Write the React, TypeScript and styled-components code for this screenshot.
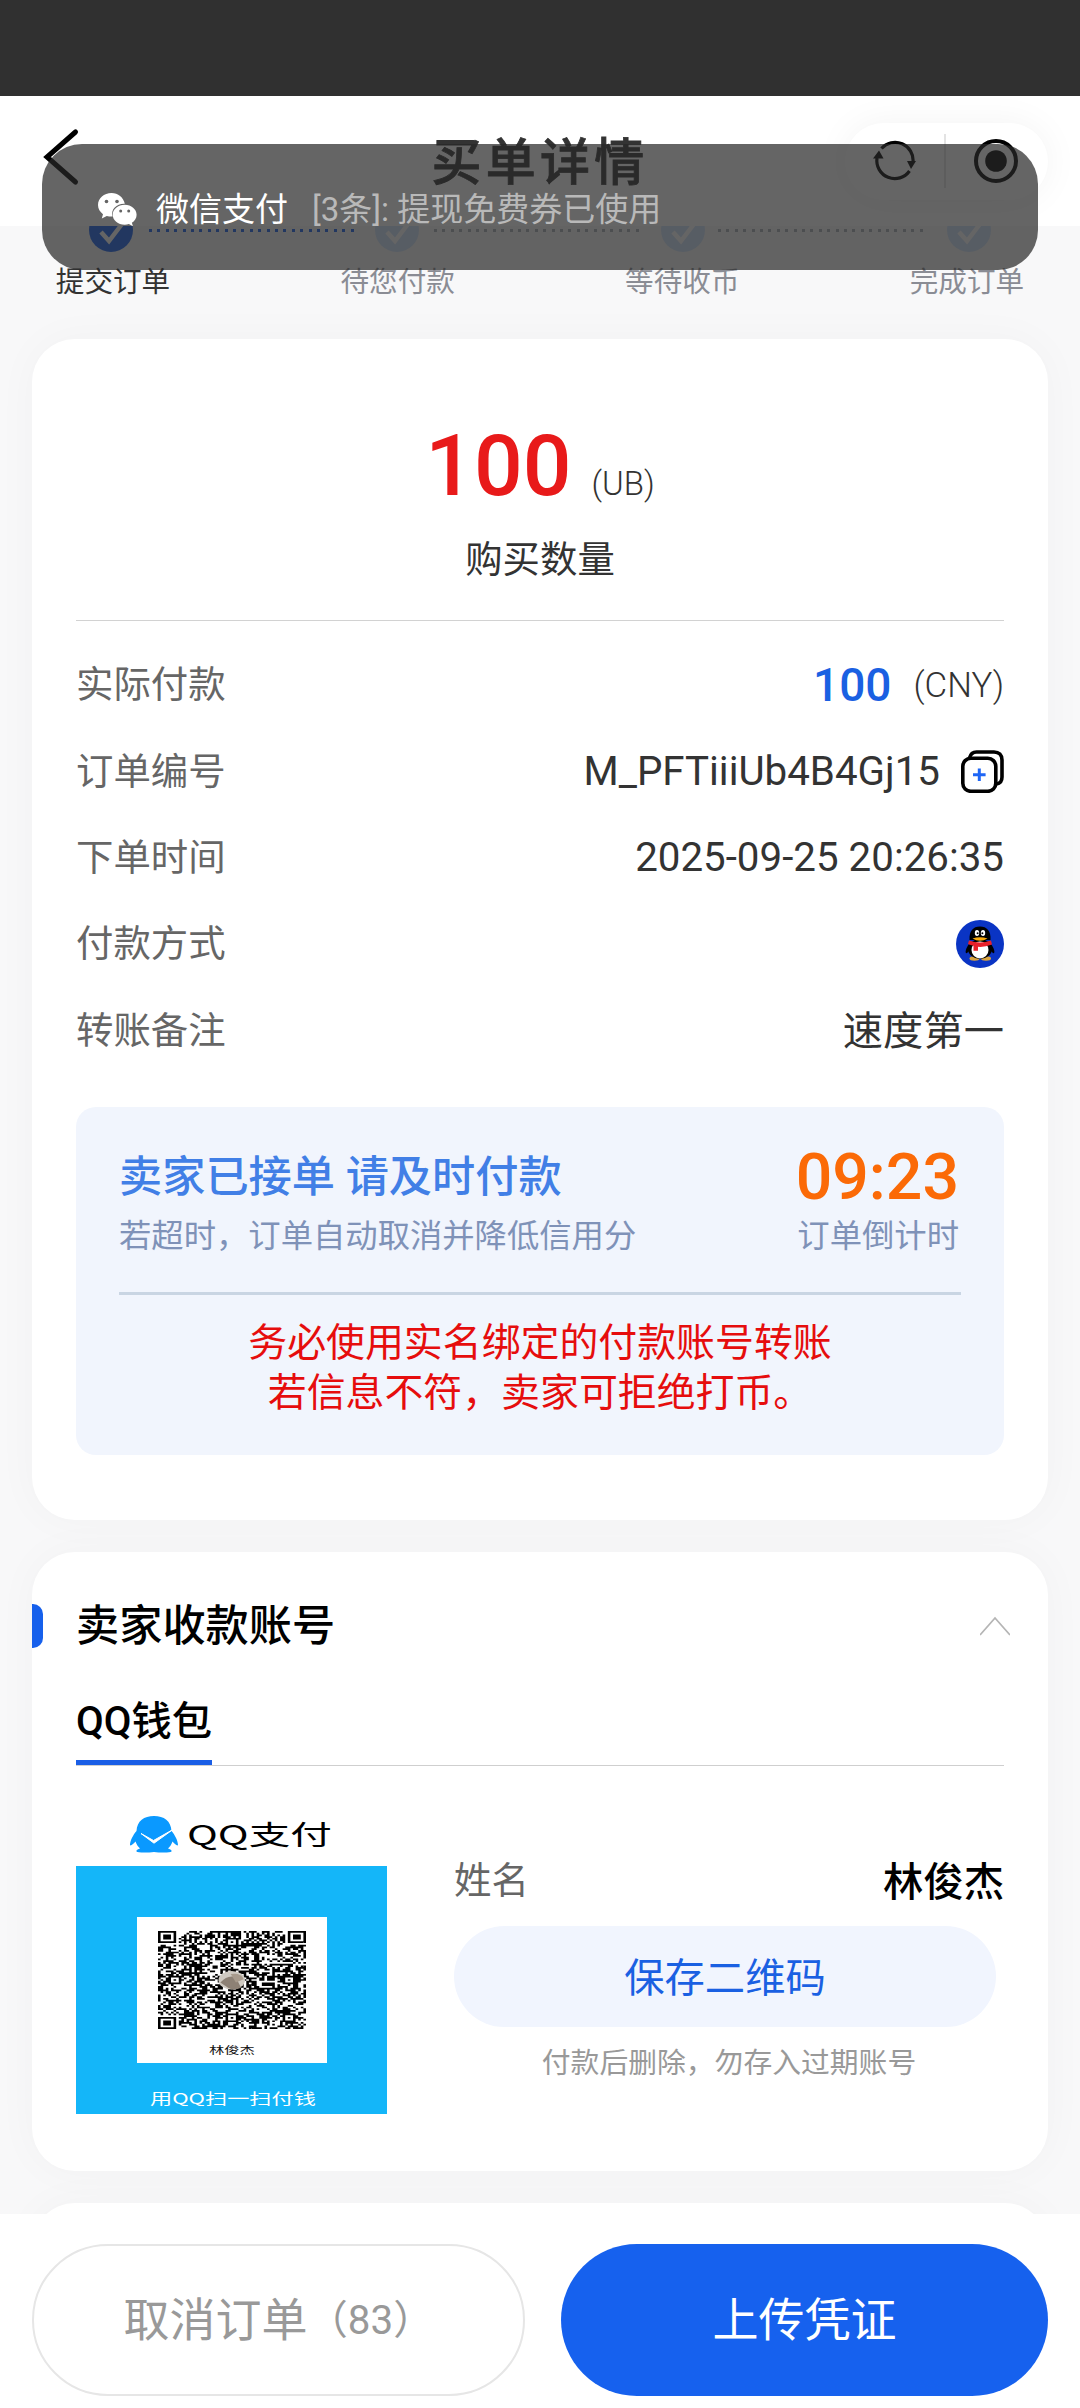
import React from 'react';
import styled, { createGlobalStyle } from 'styled-components';

const GlobalStyle = createGlobalStyle`
  * { box-sizing: border-box; }
  body {
    margin: 0;
    background: #f8f8f9;
    font-family: Roboto, "Noto Sans CJK SC", sans-serif;
    color: #333;
  }
`;

const Page = styled.div`
  position: relative;
  display: flex;
  flex-direction: column;
  width: 1080px;
  height: 2408px;
  overflow: hidden;
`;

const StatusBar = styled.div`
  flex: none;
  height: 96px;
  background: #303030;
`;

const Header = styled.header`
  position: relative;
  z-index: 2;
  flex: none;
  display: grid;
  grid-template-columns: 236px 1fr 236px;
  align-items: center;
  height: 130px;
  padding: 0 32px 0 32px;
  background: #fff;
`;

const BackIcon = styled.svg`
  display: block;
  width: 44px;
  height: 64px;
  margin: -8px 0 0 8px;
`;

const Title = styled.h1`
  margin: 3px 0 0;
  font-size: 50px;
  font-weight: 500;
  line-height: 60px;
  letter-spacing: 4.2px;
  text-align: center;
  color: #333;
  -webkit-text-stroke: 0.8px #333;
`;

const Capsule = styled.div`
  justify-self: end;
  display: flex;
  align-items: center;
  width: 203px;
  height: 77px;
  padding-right: 3px;
  border-radius: 39px;
  background: #fff;
  box-shadow: 0 0 36px rgba(0, 0, 0, 0.05);
`;

const CapsuleButton = styled.div`
  flex: 1;
  display: flex;
  justify-content: center;
  align-items: center;
`;

const CapsuleDivider = styled.div`
  width: 2px;
  height: 54px;
  background: #e3e3e3;
`;

const Toast = styled.div`
  position: absolute;
  z-index: 5;
  left: 42px;
  top: 144px;
  width: 996px;
  height: 126px;
  display: flex;
  align-items: center;
  padding: 4px 56px 0;
  border-radius: 40px;
  background: rgba(39, 39, 39, 0.714);
  font-size: 33px;
  line-height: 40px;
`;

const ToastName = styled.span`
  margin: 2px 0 0 19px;
  color: #fff;
`;

const ToastText = styled.span`
  margin: 2px 0 0 24px;
  color: #b9b9b9;
`;

const Steps = styled.div`
  flex: none;
  display: flex;
  justify-content: space-between;
  height: 131px;
  margin-top: -18px;
  padding: 0 55px;
`;

const Step = styled.div<{ $active?: boolean }>`
  position: relative;
  display: flex;
  flex-direction: column;
  align-items: center;
  width: 116px;
  font-size: 28.6px;
  line-height: 40px;
  white-space: nowrap;
  color: ${p => (p.$active ? '#333' : '#8a8c94')};
`;

const StepDot = styled.svg<{ $shift: number }>`
  display: block;
  width: 44px;
  height: 44px;
  margin: 0 ${p => -p.$shift}px 10px ${p => p.$shift}px;
`;

const StepLine = styled.div<{ $active?: boolean }>`
  position: absolute;
  left: 94px;
  top: 21px;
  width: 208px;
  height: 3px;
  background: repeating-linear-gradient(
    90deg,
    ${p => (p.$active ? '#1660ec' : '#a9adb6')} 0 3px,
    transparent 3px 8.4px
  );
`;

const Card = styled.section<{ $h: number }>`
  flex: none;
  display: flex;
  flex-direction: column;
  height: ${p => p.$h}px;
  margin: 0 32px 32px;
  padding: 0 44px;
  border-radius: 43px;
  background: #fff;
  box-shadow: 0 0 44px rgba(0, 0, 0, 0.03);
`;

const Amount = styled.div`
  display: flex;
  justify-content: center;
  align-items: baseline;
  gap: 20px;
  margin-top: 77px;
  height: 100px;
  font-size: 85.8px;
  line-height: 100px;
  font-weight: 500;
  color: #e81a1a;
`;

const Unit = styled.span<{ $size?: number }>`
  font-size: ${p => p.$size ?? 33}px;
  font-weight: 300;
  line-height: 1;
  color: #333;
`;

const Caption = styled.div`
  margin-top: 19px;
  height: 50px;
  font-size: 37.4px;
  line-height: 50px;
  text-align: center;
`;

const Rule = styled.div`
  flex: none;
  height: 1px;
  margin: 35px 0 21px;
  background: #d2d2d2;
`;

const Row = styled.div`
  display: flex;
  flex: none;
  justify-content: space-between;
  align-items: center;
  height: 86.4px;
`;

const Label = styled.span`
  padding-bottom: 6px;
  font-size: 37.4px;
  color: #666;
`;

const Value = styled.span<{ $cjk?: boolean }>`
  display: flex;
  align-items: center;
  gap: 21px;
  padding-bottom: ${p => (p.$cjk ? 6 : 0)}px;
  font-size: 40.3px;
  color: #333;
`;

const Price = styled.span`
  display: flex;
  align-items: center;
  gap: 22px;
  font-size: 46px;
  font-weight: 500;
  color: #1a60e2;
`;

const Notice = styled.div`
  flex: none;
  display: flex;
  flex-direction: column;
  height: 348px;
  margin-top: 33px;
  padding: 38px 43px 0;
  border-radius: 20px;
  background: #f1f5fd;
`;

const NoticeTop = styled.div`
  display: flex;
  justify-content: space-between;
  height: 147px;
`;

const NoticeCol = styled.div<{ $end?: boolean }>`
  display: flex;
  flex-direction: column;
  align-items: ${p => (p.$end ? 'flex-end' : 'flex-start')};
  padding-right: ${p => (p.$end ? 2 : 0)}px;
`;

const NoticeTitle = styled.div`
  height: 63px;
  font-size: 43.2px;
  font-weight: 500;
  line-height: 66px;
  color: #417fe6;
`;

const Timer = styled.div`
  height: 63px;
  font-size: 64.4px;
  font-weight: 500;
  line-height: 64px;
  color: #fb6a07;
`;

const NoticeSub = styled.div`
  font-size: 32.35px;
  line-height: 56px;
  color: #7f92b8;
`;

const Warning = styled.div`
  padding-top: 23px;
  border-top: 3px solid #c9d5e3;
  font-size: 38.9px;
  line-height: 50.5px;
  text-align: center;
  color: #e60d0d;
`;

const SectionHead = styled.div`
  display: flex;
  align-items: center;
  height: 44px;
  margin: 52px -6px 0 -44px;
`;

const Marker = styled.div`
  width: 11px;
  height: 44px;
  margin-right: 33px;
  border-radius: 0 10px 10px 0;
  background: #1660ec;
`;

const SectionTitle = styled.h2`
  flex: 1;
  margin: 2px 0 0;
  font-size: 43.2px;
  font-weight: 500;
  line-height: 44px;
  color: #000;
`;

const Tabs = styled.div`
  display: flex;
  height: 118px;
  border-bottom: 1px solid #cfcfcf;
`;

const Tab = styled.div`
  display: flex;
  height: 117px;
  padding-top: 48px;
  border-bottom: 5px solid #1a5ee6;
  font-size: 40.3px;
  font-weight: 500;
  line-height: 52px;
  color: #000;
`;

const Payee = styled.div`
  display: flex;
  gap: 67px;
  margin-top: 34px;
`;

const PayCode = styled.div`
  flex: none;
  width: 311px;
  height: 314px;
  display: flex;
  flex-direction: column;
`;

const PayCodeHead = styled.div`
  flex: none;
  display: flex;
  align-items: center;
  gap: 9px;
  height: 66px;
  padding: 2px 0 0 54px;
`;

const Wide = styled.span<{ $size: number; $w: number; $color: string; $scale: number }>`
  display: block;
  flex: none;
  width: ${p => p.$w}px;
  font-family: "Noto Sans CJK SC", sans-serif;
  font-size: ${p => p.$size}px;
  line-height: ${p => p.$size * 1.4}px;
  white-space: nowrap;
  color: ${p => p.$color};
  transform: scaleX(${p => p.$scale});
  transform-origin: left center;
`;

const PayCodeBody = styled.div`
  flex: none;
  display: flex;
  flex-direction: column;
  align-items: center;
  height: 248px;
  padding-top: 51px;
  background: #14b6f9;
`;

const PayCodeFrame = styled.div`
  display: flex;
  flex-direction: column;
  align-items: center;
  width: 190px;
  height: 146px;
  margin-bottom: 25px;
  padding-top: 14px;
  background: #fff;
`;

const QrSvg = styled.svg`
  display: block;
  flex: none;
  width: 148px;
  height: 98px;
  margin-bottom: 14px;
`;

const PayeeInfo = styled.div`
  flex: 1;
  display: flex;
  flex-direction: column;
  padding-top: 56px;
`;

const PayeeRow = styled.div`
  display: flex;
  justify-content: space-between;
  align-items: center;
  height: 50px;
`;

const PayeeName = styled.span`
  padding-bottom: 6px;
  font-size: 40.3px;
  font-weight: 500;
  color: #000;
`;

const SaveButton = styled.button`
  width: 542px;
  height: 101px;
  margin-top: 20px;
  padding: 0 0 5px;
  border: 0;
  border-radius: 51px;
  background: #f1f5fe;
  font: inherit;
  font-size: 40.3px;
  color: #1a60e2;
`;

const Tip = styled.div`
  margin-top: 15px;
  font-size: 28.8px;
  line-height: 42px;
  text-align: center;
  color: #999;
`;

const BottomBar = styled.footer`
  position: absolute;
  z-index: 3;
  left: 0;
  right: 0;
  bottom: 0;
  height: 194px;
  display: flex;
  gap: 36px;
  padding: 30px 32px 12px;
  background: #fff;
`;

const ActionButton = styled.button<{ $primary?: boolean }>`
  display: flex;
  justify-content: center;
  align-items: center;
  width: ${p => (p.$primary ? 487 : 493)}px;
  height: 152px;
  padding: 0 0 8px;
  border: ${p => (p.$primary ? '0' : '2px solid #e6e6e6')};
  border-radius: 76px;
  background: ${p => (p.$primary ? '#1661ee' : '#fff')};
  font: inherit;
  font-size: 46px;
  color: ${p => (p.$primary ? '#fff' : '#999')};
`;

const Countdown = styled.span`
  font-size: 40.3px;
`;

const QR_SIZE = 57;

function buildQrPath(): string {
  let seed = 20250925;
  const next = () => {
    seed = (Math.imul(seed, 1664525) + 1013904223) >>> 0;
    return seed / 4294967296;
  };
  const grid: boolean[][] = [];
  for (let y = 0; y < QR_SIZE; y++) {
    grid.push([]);
    for (let x = 0; x < QR_SIZE; x++) grid[y].push(next() < 0.52);
  }
  for (let i = 8; i < QR_SIZE - 8; i++) {
    grid[6][i] = i % 2 === 0;
    grid[i][6] = i % 2 === 0;
  }
  const ring = (cx: number, cy: number, reach: number, dark: (d: number) => boolean) => {
    for (let y = cy - reach; y <= cy + reach; y++) {
      for (let x = cx - reach; x <= cx + reach; x++) {
        if (x < 0 || y < 0 || x >= QR_SIZE || y >= QR_SIZE) continue;
        grid[y][x] = dark(Math.max(Math.abs(x - cx), Math.abs(y - cy)));
      }
    }
  };
  [[3, 3], [QR_SIZE - 4, 3], [3, QR_SIZE - 4]].forEach(([x, y]) =>
    ring(x, y, 4, d => d < 2 || d === 3));
  [[28, 6], [6, 28], [50, 28], [28, 50], [50, 50]].forEach(([x, y]) =>
    ring(x, y, 2, d => d !== 1));
  let path = '';
  grid.forEach((line, y) =>
    line.forEach((on, x) => {
      if (on) path += `M${x} ${y}h1v1h-1z`;
    }));
  return path;
}

const QR_PATH = buildQrPath();

const QrCode = () => (
  <QrSvg viewBox="0 0 57 57" preserveAspectRatio="none">
    <path d={QR_PATH} fill="#000" />
    <ellipse cx="28.4" cy="28.6" rx="5.1" ry="5.4" fill="#cfcac2" />
    <path d="M24 30q3-5 6-3l2 6q-3 2-5 0z" fill="#8d8175" />
    <path d="M28 25q4-1 5 3l-3 2z" fill="#a89b8d" />
  </QrSvg>
);

const StepMark = ({ active, shift }: { active?: boolean; shift: number }) => (
  <StepDot viewBox="0 0 44 44" $shift={shift}>
    <circle cx="22" cy="22" r="22" fill={active ? '#1660ec' : '#cfe2fa'} />
    <path d="M12 24l8 9 13-17" fill="none" stroke="#fff" strokeWidth="4.5" />
  </StepDot>
);

const WechatIcon = () => (
  <svg width="39" height="33" viewBox="0 0 39 33">
    <path d="M13.5 0C6 0 0 5.300 0 12c0 3.800 2 7 5 9.200L3.800 25.500l5-2.600c1.500.5 3.100.7 4.900.7h.8C12.500 16 19 10.300 26.800 10.700 25.500 4.500 20 0 13.500 0z" fill="#fff" />
    <path d="M26.700 11.700c-6.700 0-12 4.500-12 10s5.300 10 12 10c1.500 0 2.900-.2 4.200-.6l4 2.100-1-3.500c2.900-1.900 4.700-4.700 4.700-8 0-5.500-5.300-10-11.900-10z" fill="#fff" />
    <circle cx="8.500" cy="8.500" r="1.800" fill="#646464" />
    <circle cx="19" cy="8.500" r="1.800" fill="#646464" />
    <circle cx="22.700" cy="18" r="1.500" fill="#646464" />
    <circle cx="30.700" cy="18" r="1.500" fill="#646464" />
  </svg>
);

const RefreshIcon = () => (
  <svg width="44" height="42" viewBox="0 0 44 42">
    <g fill="none" stroke="#000" strokeWidth="3.200">
      <path d="M8.500 8.500A18 18 0 0 1 40 22" />
      <path d="M4 18A18 18 0 0 0 36.500 31" />
    </g>
    <path d="M0 18.500L6 10.500l4.500 8z" fill="#000" />
    <path d="M34 21h9l-5 8z" fill="#000" />
  </svg>
);

const TargetIcon = () => (
  <svg width="46" height="46" viewBox="0 0 46 46">
    <circle cx="23" cy="23" r="20" fill="none" stroke="#000" strokeWidth="4" />
    <circle cx="23" cy="23" r="10.800" fill="#000" />
  </svg>
);

const CopyIcon = () => (
  <svg width="43" height="43" viewBox="0 0 43 43">
    <path d="M8.500 8C9.500 4 12 2 15.500 2H33c5 0 8 3 8 8v17c0 4-2 6.500-5.500 7" fill="none" stroke="#000" strokeWidth="3.600" />
    <rect x="1.800" y="8.300" width="33" height="33" rx="8" fill="#fff" stroke="#000" strokeWidth="3.600" />
    <path d="M18.300 18.500v12.500M12 24.800h12.600" stroke="#1f66f5" strokeWidth="3" />
  </svg>
);

const QQIcon = () => (
  <svg width="48" height="48" viewBox="0 0 48 48">
    <circle cx="24" cy="24" r="24" fill="#0a34c4" />
    <ellipse cx="18.500" cy="38.500" rx="5" ry="2.200" fill="#d9a441" />
    <ellipse cx="30" cy="38.500" rx="5" ry="2.200" fill="#d9a441" />
    <path d="M13 24c-3 4-4 8-3 9s3-2 3-2zM35 24c3 4 4 8 3 9s-3-2-3-2z" fill="#000" />
    <ellipse cx="24" cy="29" rx="12" ry="10" fill="#000" />
    <ellipse cx="24" cy="30" rx="8.500" ry="8.500" fill="#fff" />
    <path d="M13.500 20C13 11 17 6.500 24 6.500S35 11 34.500 20z" fill="#000" />
    <ellipse cx="21" cy="13" rx="2.200" ry="3" fill="#fff" />
    <ellipse cx="27" cy="13" rx="2.200" ry="3" fill="#fff" />
    <circle cx="21.600" cy="13.300" r="1" fill="#000" />
    <circle cx="26.400" cy="13.300" r="1" fill="#000" />
    <path d="M16.500 18.500q7.500-2.500 15 0-7.500 4.500-15 0z" fill="#f7a80b" />
    <path d="M13 20.500q11 4 22 0l1 4q-8 3-14 2.300v4h-4.500v-5q-3-.5-5.500-1.800z" fill="#e8202a" />
  </svg>
);

const QQPayIcon = () => (
  <svg width="48" height="37" viewBox="0 0 48 37">
    <path d="M24 0C14 0 7 5 6.500 15 3 19 0 25 0 29c.5 1.500 4-1.500 5.500-3.500 1 3 2.500 5 4.500 7-3 1-4 2-3.500 3 1 1.500 12 1.200 17.500.5 5.500.700 16.500 1 17.500-.5.5-1-.5-2-3.500-3 2-2 3.500-4 4.500-7 1.500 2 5 5 5.500 3.500 0-4-3-10-6.500-14C41 5 34 0 24 0z" fill="#0a99ff" />
    <path d="M11 17.500l12.500 7L43 13.500l-19 13.700z" fill="#fff" stroke="#fff" strokeWidth="1" />
  </svg>
);

const steps = [
  { name: '提交订单', shift: -2 },
  { name: '待您付款', shift: -1 },
  { name: '等待收币', shift: 1 },
  { name: '完成订单', shift: 2 },
];

export default function App() {
  return (
    <>
      <GlobalStyle />
      <Page>
        <StatusBar />
        <Header>
          <BackIcon viewBox="0 0 44 64">
            <path d="M35.500 7L7 32l28.500 25" fill="none" stroke="#000" strokeWidth="5" strokeLinecap="round" />
          </BackIcon>
          <Title>买单详情</Title>
          <Capsule>
            <CapsuleButton><RefreshIcon /></CapsuleButton>
            <CapsuleDivider />
            <CapsuleButton><TargetIcon /></CapsuleButton>
          </Capsule>
        </Header>
        <Toast>
          <WechatIcon />
          <ToastName>微信支付</ToastName>
          <ToastText>[3条]: 提现免费券已使用</ToastText>
        </Toast>

        <Steps>
          {steps.map((step, i) => (
            <Step key={step.name} $active={i === 0}>
              <StepMark active={i === 0} shift={step.shift} />
              {step.name}
              {i < steps.length - 1 && <StepLine $active={i === 0} />}
            </Step>
          ))}
        </Steps>

        <Card $h={1181}>
          <Amount>100<Unit>(UB)</Unit></Amount>
          <Caption>购买数量</Caption>
          <Rule />
          <Row>
            <Label>实际付款</Label>
            <Price>100<Unit $size={34.8}>(CNY)</Unit></Price>
          </Row>
          <Row>
            <Label>订单编号</Label>
            <Value>M_PFTiiiUb4B4Gj15<CopyIcon /></Value>
          </Row>
          <Row>
            <Label>下单时间</Label>
            <Value>2025-09-25 20:26:35</Value>
          </Row>
          <Row>
            <Label>付款方式</Label>
            <Value><QQIcon /></Value>
          </Row>
          <Row>
            <Label>转账备注</Label>
            <Value $cjk>速度第一</Value>
          </Row>
          <Notice>
            <NoticeTop>
              <NoticeCol>
                <NoticeTitle>卖家已接单 请及时付款</NoticeTitle>
                <NoticeSub>若超时，订单自动取消并降低信用分</NoticeSub>
              </NoticeCol>
              <NoticeCol $end>
                <Timer>09:23</Timer>
                <NoticeSub>订单倒计时</NoticeSub>
              </NoticeCol>
            </NoticeTop>
            <Warning>
              务必使用实名绑定的付款账号转账<br />
              若信息不符，卖家可拒绝打币。
            </Warning>
          </Notice>
        </Card>

        <Card $h={619}>
          <SectionHead>
            <Marker />
            <SectionTitle>卖家收款账号</SectionTitle>
            <svg width="30" height="20" viewBox="0 0 30 20">
              <path d="M0 19L15 2l15 17" fill="none" stroke="#b5b5b5" strokeWidth="1.800" />
            </svg>
          </SectionHead>
          <Tabs><Tab>QQ钱包</Tab></Tabs>
          <Payee>
            <PayCode>
              <PayCodeHead>
                <QQPayIcon />
                <Wide $size={27} $w={144} $color="#000" $scale={1.54}>QQ支付</Wide>
              </PayCodeHead>
              <PayCodeBody>
                <PayCodeFrame>
                  <QrCode />
                  <Wide $size={10.4} $w={46} $color="#111" $scale={1.47}>林俊杰</Wide>
                </PayCodeFrame>
                <Wide $size={14.4} $w={164} $color="#fff" $scale={1.54}>用QQ扫一扫付钱</Wide>
              </PayCodeBody>
            </PayCode>
            <PayeeInfo>
              <PayeeRow>
                <Label>姓名</Label>
                <PayeeName>林俊杰</PayeeName>
              </PayeeRow>
              <SaveButton>保存二维码</SaveButton>
              <Tip>付款后删除，勿存入过期账号</Tip>
            </PayeeInfo>
          </Payee>
        </Card>

        <Card $h={300} />

        <BottomBar>
          <ActionButton>取消订单<Countdown>（83）</Countdown></ActionButton>
          <ActionButton $primary>上传凭证</ActionButton>
        </BottomBar>
      </Page>
    </>
  );
}
